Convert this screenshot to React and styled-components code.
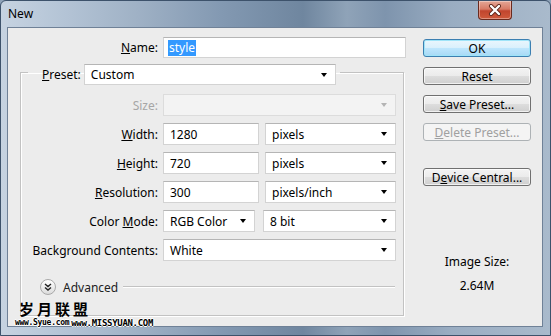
import React from 'react'
import styled, { createGlobalStyle, css } from 'styled-components'

const GlobalStyle = createGlobalStyle`
  html, body {
    margin: 0;
    padding: 0;
    background: #8fa3b9;
  }
  body {
    font-family: "Noto Sans", "DejaVu Sans", sans-serif;
    font-size: 12px;
    color: #000;
  }
  * {
    box-sizing: border-box;
  }
`

const Window = styled.div`
  position: relative;
  width: 551px;
  height: 336px;
  display: flex;
  flex-direction: column;
  border: 1px solid #3d526b;
  border-radius: 6px 6px 0 0;
  overflow: hidden;
  background: linear-gradient(90deg,
    #c6d3e1 0%, #b3c3d5 12%, #9fb1c5 25%, #8399b2 40%,
    #6f869f 55%, #8fa3b8 63%, #7e94ad 70%, #9aadc2 82%, #a9bacc 100%);
`

const TitleBar = styled.div`
  height: 26px;
  display: flex;
  align-items: flex-start;
  justify-content: space-between;
  padding: 0 38px 0 7px;
`

const Title = styled.span`
  margin-top: 4px;
  font-size: 12px;
  color: #000;
`

const CloseButton = styled.div`
  width: 34px;
  height: 19px;
  display: flex;
  align-items: center;
  justify-content: center;
  border: 1px solid #6a2a1e;
  border-top: 0;
  border-radius: 0 0 4px 4px;
  background: linear-gradient(#e4a796 0%, #d77a65 45%, #c1452e 55%, #cf5a3c 100%);
  box-shadow: inset 0 0 0 1px rgba(255, 255, 255, 0.35);
`

const Client = styled.div`
  flex: 1;
  margin: 0 7px 8px 6px;
  display: flex;
  border: 1px solid #6f8197;
  background: #ececec;
`

const LeftPane = styled.div`
  width: 400px;
  padding: 9px 0 0 12px;
  display: flex;
  flex-direction: column;
`

const NameRow = styled.div`
  display: grid;
  grid-template-columns: 138px 243px;
  column-gap: 5px;
  height: 21px;
  align-items: center;
`

const Label = styled.label`
  text-align: right;
  white-space: nowrap;
  color: ${(p) => (p.disabled ? '#a6a6a6' : '#000')};
`

const fieldBase = css`
  height: 100%;
  display: flex;
  align-items: center;
  padding: 0 6px;
  background: #fff;
  border: 1px solid #d3d3d3;
  border-top-color: #b5b5b5;
  white-space: nowrap;
`

const Input = styled.div`
  ${fieldBase}
  width: ${(p) => (p.w ? `${p.w}px` : '100%')};
`

const Selected = styled.span`
  background: #3399ff;
  color: #fff;
  padding: 0 1px;
  margin-left: -2px;
  line-height: 16px;
`

const Select = styled.div`
  ${fieldBase}
  justify-content: space-between;
  width: ${(p) => (p.w ? `${p.w}px` : '100%')};
  ${(p) => p.disabled && css`
    background: #f3f3f3;
    border-color: #dcdcdc;
  `}
`

const Arrow = styled.span`
  width: 0;
  height: 0;
  margin-right: 2px;
  border-left: 3.5px solid transparent;
  border-right: 3.5px solid transparent;
  border-top: 4px solid ${(p) => (p.disabled ? '#b4b4b4' : '#000')};
`

const Group = styled.fieldset`
  margin: 1px 0 0 0;
  padding: 9px 6px 20px 0;
  width: 384px;
  border: 1px solid #c2c2c2;
  box-shadow: inset 1px 1px 0 #fff, 1px 1px 0 #fff;
`

const Legend = styled.legend`
  margin-left: 7px;
  padding: 5px 4px 0 14px;
  display: flex;
  align-items: center;
  gap: 3px;
  height: 26px;
`

const Rows = styled.div`
  display: grid;
  grid-template-columns: 137px 233px;
  grid-auto-rows: 22px;
  column-gap: 5px;
  row-gap: 7px;
  align-items: center;
`

const Pair = styled.div`
  height: 100%;
  display: flex;
  justify-content: space-between;
`

const AdvancedRow = styled.div`
  margin-top: 18px;
  padding-left: 19px;
  display: flex;
  align-items: center;
  height: 16px;
`

const RoundToggle = styled.span`
  width: 16px;
  height: 16px;
  border-radius: 50%;
  border: 1px solid #a9a9a9;
  background: linear-gradient(#ffffff, #dcdcdc);
  display: flex;
  align-items: center;
  justify-content: center;
`

const AdvancedText = styled.span`
  margin-left: 7px;
  color: #222;
`

const Rule = styled.span`
  flex: 1;
  margin: 0 2px 0 5px;
  height: 2px;
  border-top: 1px solid #c2c2c2;
  border-bottom: 1px solid #fff;
`

const RightPane = styled.div`
  width: 108px;
  margin-left: 15px;
  padding-top: 11px;
  display: flex;
  flex-direction: column;
  gap: 10px;
`

const Button = styled.div`
  height: 18px;
  display: flex;
  align-items: center;
  justify-content: center;
  border: 1px solid #707070;
  border-radius: 3px;
  background: linear-gradient(#f3f3f3 0%, #ebebeb 50%, #dddddd 51%, #cfcfcf 100%);
  box-shadow: inset 0 0 0 1px rgba(255, 255, 255, 0.7);
  white-space: nowrap;
  ${(p) => p.primary && css`
    border-color: #3c7fb1;
    background: linear-gradient(#eaf6fd 0%, #d9f0fc 50%, #bee6fd 51%, #a7d9f5 100%);
    box-shadow: inset 0 0 0 1px #9fe4f8;
  `}
  ${(p) => p.disabled && css`
    border-color: #adb2b5;
    background: #f4f4f4;
    color: #a0a0a0;
    box-shadow: none;
  `}
  ${(p) => p.spaced && css`
    margin-top: 17px;
  `}
`

const ImageSize = styled.div`
  margin-top: 58px;
  display: flex;
  flex-direction: column;
  align-items: center;
  gap: 8px;
  line-height: 16px;
`

const Watermark = styled.div`
  position: absolute;
  left: 14px;
  top: 300px;
  display: flex;
  flex-direction: column;
  gap: 1px;
  pointer-events: none;
`

const MarkTitle = styled.span`
  margin-left: 4px;
  font-family: "Noto Sans CJK SC", sans-serif;
  font-size: 15px;
  font-weight: 700;
  letter-spacing: 3px;
  line-height: 16px;
  color: #000;
`

const MarkLinks = styled.span`
  display: flex;
  gap: 2px;
  align-items: flex-end;
`

const MarkUrl = styled.span`
  font-family: "DejaVu Sans Mono", monospace;
  font-size: ${(p) => p.size}px;
  font-weight: 700;
  line-height: 10px;
  letter-spacing: -0.3px;
  color: #000;
  text-shadow: 1px 0 #fff, -1px 0 #fff, 0 1px #fff, 0 -1px #fff;
  white-space: nowrap;
`

const CloseIcon = () => (
  <svg width="14" height="12" viewBox="0 0 14 12">
    <path d="M3 2 L11 10 M11 2 L3 10" stroke="#5a2418" strokeWidth="4" strokeLinecap="round" />
    <path d="M3 2 L11 10 M11 2 L3 10" stroke="#fff" strokeWidth="2.4" strokeLinecap="round" />
  </svg>
)

const Chevrons = () => (
  <svg width="8" height="8" viewBox="0 0 8 8">
    <path d="M1 1 L4 3.5 L7 1 M1 4.5 L4 7 L7 4.5" stroke="#222" strokeWidth="1.4" fill="none" />
  </svg>
)

const Dropdown = ({ value, w, disabled }) => (
  <Select w={w} disabled={disabled}>
    <span>{value}</span>
    <Arrow disabled={disabled} />
  </Select>
)

export default function App() {
  return (
    <>
      <GlobalStyle />
      <Window>
        <TitleBar>
          <Title>New</Title>
          <CloseButton><CloseIcon /></CloseButton>
        </TitleBar>
        <Client>
          <LeftPane>
            <NameRow>
              <Label><u>N</u>ame:</Label>
              <Input><Selected>style</Selected></Input>
            </NameRow>
            <Group>
              <Legend>
                <Label><u>P</u>reset:</Label>
                <Dropdown value="Custom" w={252} />
              </Legend>
              <Rows>
                <Label disabled>Size:</Label>
                <Dropdown value="" disabled />

                <Label><u>W</u>idth:</Label>
                <Pair>
                  <Input w={96}>1280</Input>
                  <Dropdown value="pixels" w={131} />
                </Pair>

                <Label><u>H</u>eight:</Label>
                <Pair>
                  <Input w={96}>720</Input>
                  <Dropdown value="pixels" w={131} />
                </Pair>

                <Label><u>R</u>esolution:</Label>
                <Pair>
                  <Input w={96}>300</Input>
                  <Dropdown value="pixels/inch" w={131} />
                </Pair>

                <Label>Color <u>M</u>ode:</Label>
                <Pair>
                  <Dropdown value="RGB Color" w={92} />
                  <Dropdown value="8 bit" w={133} />
                </Pair>

                <Label>Background Contents:</Label>
                <Dropdown value="White" />
              </Rows>
              <AdvancedRow>
                <RoundToggle><Chevrons /></RoundToggle>
                <AdvancedText>Advanced</AdvancedText>
                <Rule />
              </AdvancedRow>
            </Group>
          </LeftPane>
          <RightPane>
            <Button primary>OK</Button>
            <Button>Reset</Button>
            <Button><u>S</u>ave Preset...</Button>
            <Button disabled><u>D</u>elete Preset...</Button>
            <Button spaced>D<u>e</u>vice Central...</Button>
            <ImageSize>
              <span>Image Size:</span>
              <span>2.64M</span>
            </ImageSize>
          </RightPane>
        </Client>
        <Watermark>
          <MarkTitle>岁月联盟</MarkTitle>
          <MarkLinks>
            <MarkUrl size={8}>www.Syue.com</MarkUrl>
            <MarkUrl size={9}>www.MISSYUAN.COM</MarkUrl>
          </MarkLinks>
        </Watermark>
      </Window>
    </>
  )
}
